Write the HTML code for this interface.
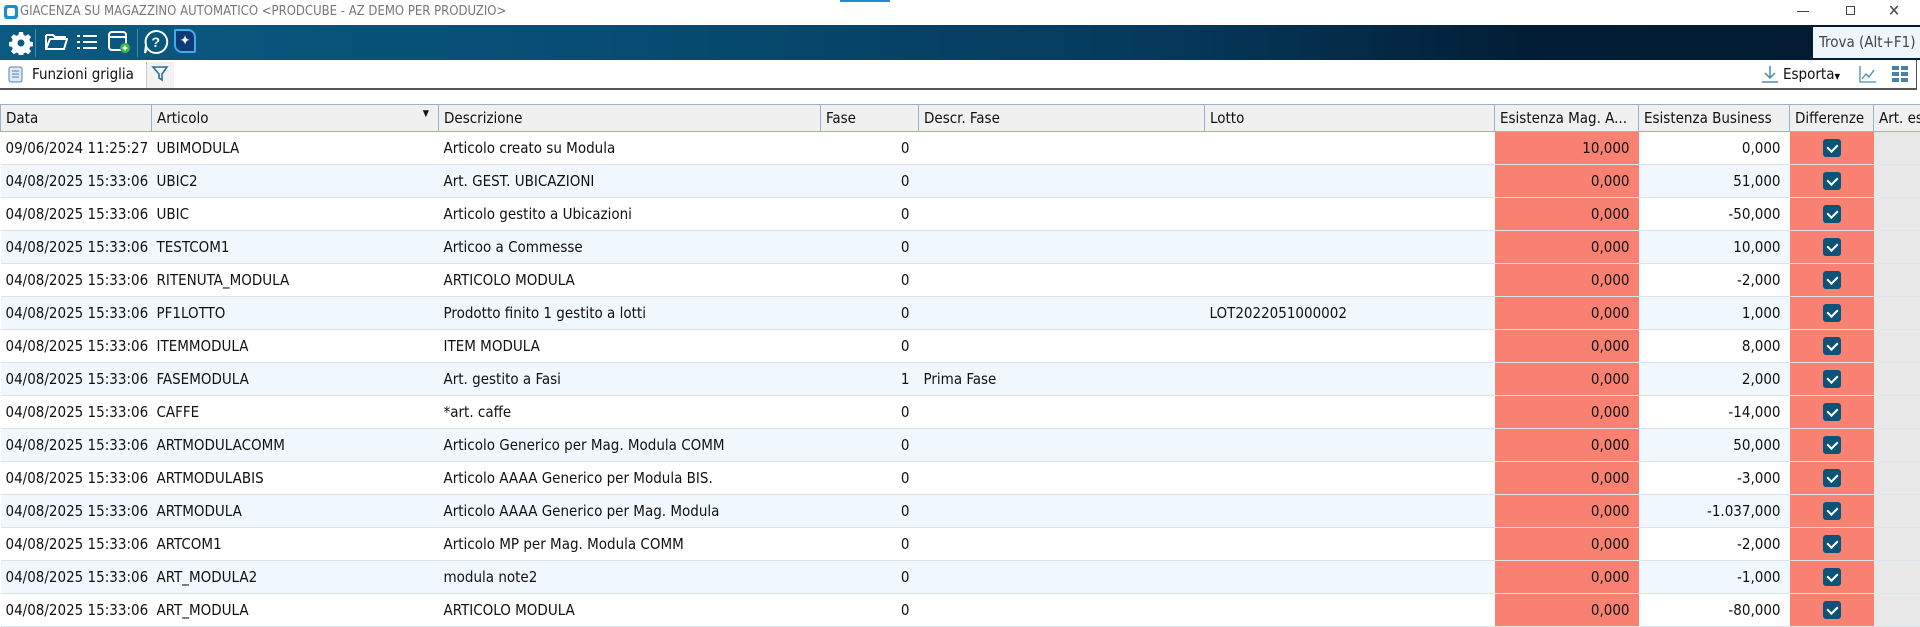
<!DOCTYPE html>
<html><head><meta charset="utf-8"><style>
*{margin:0;padding:0;box-sizing:border-box}
body{width:1920px;height:626px;overflow:hidden;background:#fff;font-family:"DejaVu Sans Condensed","Liberation Sans",sans-serif;font-size:15px;color:#111;position:relative}
.abs{position:absolute}
#title{top:0;left:0;width:1920px;height:25px;background:#fff;color:#777;font-size:13px}
#tb{top:25px;left:0;width:1920px;height:35px;background:linear-gradient(90deg,#0b5a82 0%,#074e75 30%,#053a5c 60%,#021d35 80%,#031c33 100%)}
#tb2{top:60px;left:0;width:1917px;height:30px;border-right:1px solid #555;border-bottom:2px solid #555}
table{position:absolute;top:104px;left:0;border-collapse:collapse;table-layout:fixed;width:1920px}
td,th{height:33px;padding:0 5px;white-space:nowrap;overflow:hidden;font-weight:normal;text-align:left;border-bottom:1px solid #dde3ea}
th{height:27px;background:#f0f0f0;border:1px solid #9fb0c8}
tr:nth-child(odd) td{background:#f0f8fe}
td.r{text-align:right;padding-right:9px}
td.red,tr:nth-child(odd) td.red{background:#f98172}
td.g,tr:nth-child(odd) td.g{background:#e8e8e8}
.cb{display:inline-block;width:18px;height:18px;background:#0c5378;border-radius:3px;vertical-align:middle;position:relative}
.cb:after{content:"";position:absolute;left:6px;top:3px;width:5px;height:8px;border:solid #fff;border-width:0 2px 2px 0;transform:rotate(45deg)}
</style></head><body>
<div id="title" class="abs">
<div class="abs" style="left:4px;top:5px;width:14px;height:14px;background:#1a8ed0;border-radius:3px"><div class="abs" style="left:3px;top:3px;width:8px;height:8px;background:#fff;border-radius:2px"></div></div>
<div class="abs" style="left:20px;top:4px">GIACENZA SU MAGAZZINO AUTOMATICO &lt;PRODCUBE - AZ DEMO PER PRODUZIO&gt;</div>
<div class="abs" style="left:840px;top:0;width:50px;height:2px;background:#1a8ed0"></div>
<div class="abs" style="left:1797px;top:11px;width:12px;height:1px;background:#444"></div>
<div class="abs" style="left:1846px;top:6px;width:9px;height:9px;border:1px solid #444"></div>
<div class="abs" style="left:1888px;top:1px;font-size:16px;color:#444">✕</div>
</div>
<div id="tb" class="abs">
<svg class="abs" style="left:9px;top:6px" width="24" height="24" viewBox="0 0 24 24"><path fill="#fff" d="M10 1h4l.6 3 2 .9 2.6-1.7 2.8 2.8-1.7 2.6.9 2 3 .6v4l-3 .6-.9 2 1.7 2.6-2.8 2.8-2.6-1.7-2 .9-.6 3h-4l-.6-3-2-.9-2.6 1.7-2.8-2.8 1.7-2.6-.9-2-3-.6v-4l3-.6.9-2-1.7-2.6 2.8-2.8 2.6 1.7 2-.9zM12 8.5a3.5 3.5 0 1 0 0 7 3.5 3.5 0 0 0 0-7z"/></svg>
<div class="abs" style="left:35px;top:4px;width:1px;height:28px;background:#4d87a8"></div>
<svg class="abs" style="left:44px;top:7px" width="24" height="20" viewBox="0 0 24 20"><path d="M2 3h7l2 2h10v2M2 3v14h18l3-10H6L2 17" fill="none" stroke="#fff" stroke-width="2"/></svg>
<svg class="abs" style="left:76px;top:7px" width="22" height="20"><g fill="#fff"><rect x="1" y="3" width="3" height="2"/><rect x="7" y="3" width="14" height="2"/><rect x="1" y="9" width="3" height="2"/><rect x="7" y="9" width="14" height="2"/><rect x="1" y="15" width="3" height="2"/><rect x="7" y="15" width="14" height="2"/></g></svg>
<svg class="abs" style="left:107px;top:5px" width="24" height="24"><rect x="2" y="2" width="17" height="18" rx="3" fill="none" stroke="#fff" stroke-width="2"/><line x1="2" y1="7" x2="19" y2="7" stroke="#fff" stroke-width="2"/><circle cx="18" cy="18" r="5" fill="#3cb44a"/><path d="M15.5 18h5M18 15.5v5" stroke="#fff" stroke-width="1.5"/></svg>
<div class="abs" style="left:137px;top:4px;width:1px;height:28px;background:#4d87a8"></div>
<svg class="abs" style="left:143px;top:4px" width="26" height="26"><path d="M13 2a11 11 0 1 1-9 17l-2 5 1-8A11 11 0 0 1 13 2z" fill="none" stroke="#fff" stroke-width="2"/><text x="8.5" y="18" fill="#fff" font-size="14" font-family="Liberation Sans" font-weight="bold">?</text></svg>
<div class="abs" style="left:174px;top:4px;width:22px;height:24px;background:#0f3a78;border:2px solid #4aa8e8;border-radius:2px 8px 2px 8px;color:#fff;font-size:14px;text-align:center;line-height:20px">✦</div>
<div class="abs" style="left:1813px;top:2px;width:107px;height:31px;background:#eef6fc;color:#444;font-size:15px;padding:6px 0 0 6px">Trova (Alt+F1)</div>
</div>
<div id="tb2" class="abs">
<svg class="abs" style="left:8px;top:6px" width="16" height="17"><rect x="1" y="1" width="13" height="15" rx="2" fill="#dde9f4" stroke="#5c7ea0"/><path d="M4 5h7M4 8h7M4 11h7" stroke="#5c7ea0"/></svg>
<div class="abs" style="left:32px;top:5px;font-size:15px">Funzioni griglia</div>
<div class="abs" style="left:146px;top:2px;width:28px;height:26px;background:#f2f2f2;border-left:1px solid #ccc"></div>
<svg class="abs" style="left:151px;top:5px" width="18" height="18"><path d="M2 2h14l-5 7v6l-3-2V9z" fill="none" stroke="#2a6f98" stroke-width="1.6"/></svg>
<svg class="abs" style="left:1760px;top:4px" width="20" height="20"><path d="M10 2v12M5 9l5 5 5-5M2 18h16" fill="none" stroke="#4a8ab8" stroke-width="1.5"/></svg>
<div class="abs" style="left:1783px;top:5px;font-size:15px">Esporta<span style="font-size:8px">▼</span></div>
<svg class="abs" style="left:1858px;top:4px" width="20" height="20"><path d="M2 2v16h16M4 15l4-5 3 3 5-7" fill="none" stroke="#4a8ab8" stroke-width="1.3"/></svg>
<svg class="abs" style="left:1892px;top:6px" width="16" height="16" fill="#4a7fa6"><rect x="0" y="0" width="7" height="4"/><rect x="9" y="0" width="7" height="4"/><rect x="0" y="6" width="7" height="4"/><rect x="9" y="6" width="7" height="4"/><rect x="0" y="12" width="7" height="4"/><rect x="9" y="12" width="7" height="4"/></svg>
</div>
<table>
<colgroup><col style="width:151px"><col style="width:287px"><col style="width:382px"><col style="width:98px"><col style="width:286px"><col style="width:290px"><col style="width:144px"><col style="width:151px"><col style="width:84px"><col style="width:47px"></colgroup>
<tr><th>Data</th><th>Articolo<span style="float:right;font-size:9px;margin-right:4px">▼</span></th><th>Descrizione</th><th>Fase</th><th>Descr. Fase</th><th>Lotto</th><th>Esistenza Mag. A...</th><th>Esistenza Business</th><th>Differenze</th><th>Art. es</th></tr>
<tr><td>09/06/2024 11:25:27</td><td>UBIMODULA</td><td>Articolo creato su Modula</td><td class="r">0</td><td></td><td></td><td class="r red">10,000</td><td class="r">0,000</td><td class="red" style="text-align:center"><span class="cb"></span></td><td class="g"></td></tr>
<tr><td>04/08/2025 15:33:06</td><td>UBIC2</td><td>Art. GEST. UBICAZIONI</td><td class="r">0</td><td></td><td></td><td class="r red">0,000</td><td class="r">51,000</td><td class="red" style="text-align:center"><span class="cb"></span></td><td class="g"></td></tr>
<tr><td>04/08/2025 15:33:06</td><td>UBIC</td><td>Articolo gestito a Ubicazioni</td><td class="r">0</td><td></td><td></td><td class="r red">0,000</td><td class="r">-50,000</td><td class="red" style="text-align:center"><span class="cb"></span></td><td class="g"></td></tr>
<tr><td>04/08/2025 15:33:06</td><td>TESTCOM1</td><td>Articoo a Commesse</td><td class="r">0</td><td></td><td></td><td class="r red">0,000</td><td class="r">10,000</td><td class="red" style="text-align:center"><span class="cb"></span></td><td class="g"></td></tr>
<tr><td>04/08/2025 15:33:06</td><td>RITENUTA_MODULA</td><td>ARTICOLO MODULA</td><td class="r">0</td><td></td><td></td><td class="r red">0,000</td><td class="r">-2,000</td><td class="red" style="text-align:center"><span class="cb"></span></td><td class="g"></td></tr>
<tr><td>04/08/2025 15:33:06</td><td>PF1LOTTO</td><td>Prodotto finito 1 gestito a lotti</td><td class="r">0</td><td></td><td>LOT2022051000002</td><td class="r red">0,000</td><td class="r">1,000</td><td class="red" style="text-align:center"><span class="cb"></span></td><td class="g"></td></tr>
<tr><td>04/08/2025 15:33:06</td><td>ITEMMODULA</td><td>ITEM MODULA</td><td class="r">0</td><td></td><td></td><td class="r red">0,000</td><td class="r">8,000</td><td class="red" style="text-align:center"><span class="cb"></span></td><td class="g"></td></tr>
<tr><td>04/08/2025 15:33:06</td><td>FASEMODULA</td><td>Art. gestito a Fasi</td><td class="r">1</td><td>Prima Fase</td><td></td><td class="r red">0,000</td><td class="r">2,000</td><td class="red" style="text-align:center"><span class="cb"></span></td><td class="g"></td></tr>
<tr><td>04/08/2025 15:33:06</td><td>CAFFE</td><td>*art. caffe</td><td class="r">0</td><td></td><td></td><td class="r red">0,000</td><td class="r">-14,000</td><td class="red" style="text-align:center"><span class="cb"></span></td><td class="g"></td></tr>
<tr><td>04/08/2025 15:33:06</td><td>ARTMODULACOMM</td><td>Articolo Generico per Mag. Modula COMM</td><td class="r">0</td><td></td><td></td><td class="r red">0,000</td><td class="r">50,000</td><td class="red" style="text-align:center"><span class="cb"></span></td><td class="g"></td></tr>
<tr><td>04/08/2025 15:33:06</td><td>ARTMODULABIS</td><td>Articolo AAAA Generico per Modula BIS.</td><td class="r">0</td><td></td><td></td><td class="r red">0,000</td><td class="r">-3,000</td><td class="red" style="text-align:center"><span class="cb"></span></td><td class="g"></td></tr>
<tr><td>04/08/2025 15:33:06</td><td>ARTMODULA</td><td>Articolo AAAA Generico per Mag. Modula</td><td class="r">0</td><td></td><td></td><td class="r red">0,000</td><td class="r">-1.037,000</td><td class="red" style="text-align:center"><span class="cb"></span></td><td class="g"></td></tr>
<tr><td>04/08/2025 15:33:06</td><td>ARTCOM1</td><td>Articolo MP per Mag. Modula COMM</td><td class="r">0</td><td></td><td></td><td class="r red">0,000</td><td class="r">-2,000</td><td class="red" style="text-align:center"><span class="cb"></span></td><td class="g"></td></tr>
<tr><td>04/08/2025 15:33:06</td><td>ART_MODULA2</td><td>modula note2</td><td class="r">0</td><td></td><td></td><td class="r red">0,000</td><td class="r">-1,000</td><td class="red" style="text-align:center"><span class="cb"></span></td><td class="g"></td></tr>
<tr><td>04/08/2025 15:33:06</td><td>ART_MODULA</td><td>ARTICOLO MODULA</td><td class="r">0</td><td></td><td></td><td class="r red">0,000</td><td class="r">-80,000</td><td class="red" style="text-align:center"><span class="cb"></span></td><td class="g"></td></tr>
</table>
</body></html>
